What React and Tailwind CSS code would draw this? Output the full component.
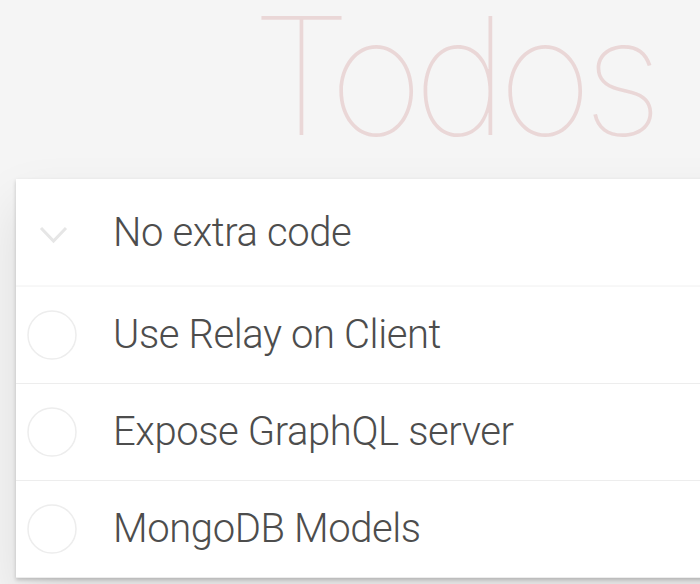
import React from 'react';

const todos = ['Use Relay on Client', 'Expose GraphQL server', 'MongoDB Models'];

const Circle = () => (
  <svg width="50" height="50" viewBox="0 0 50 50" className="shrink-0">
    <circle cx="25" cy="25" r="24" fill="none" stroke="#ededed" strokeWidth="1.5" />
  </svg>
);

export default function App() {
  return (
    <div className="w-[700px] h-[584px] overflow-hidden bg-[#f5f5f5] font-['Roboto',Arial,sans-serif]">
      <div className="h-[179px] pl-[204px] text-center">
        <h1 className="text-[163px] leading-[152px] tracking-[-10px] font-thin font-['Inter',sans-serif] text-[rgba(175,47,47,0.15)]">
          Todos
        </h1>
      </div>
      <div className="ml-4 w-[882px] bg-white shadow-[0_2px_4px_rgba(0,0,0,0.2),0_25px_50px_rgba(0,0,0,0.1)]">
        <div className="h-[108px] flex items-center shadow-[inset_0_-2px_1px_rgba(0,0,0,0.03)]">
          <svg width="29" height="18" viewBox="0 0 29 18" className="ml-[23px] mt-[4px] shrink-0">
            <polyline points="2,2 14.5,15 27,2" fill="none" stroke="#e6e6e6" strokeWidth="3" />
          </svg>
          <span className="ml-[45px] text-[40px] tracking-[-0.4px] font-light text-[#4d4d4d]">No extra code</span>
        </div>
        {todos.map(t => (
          <div key={t} className="h-[97px] flex items-center pl-[11px] border-b border-[#ededed]">
            <Circle />
            <span className="ml-9 text-[40px] tracking-[-0.4px] font-light text-[#4d4d4d]">{t}</span>
          </div>
        ))}
      </div>
    </div>
  );
}
